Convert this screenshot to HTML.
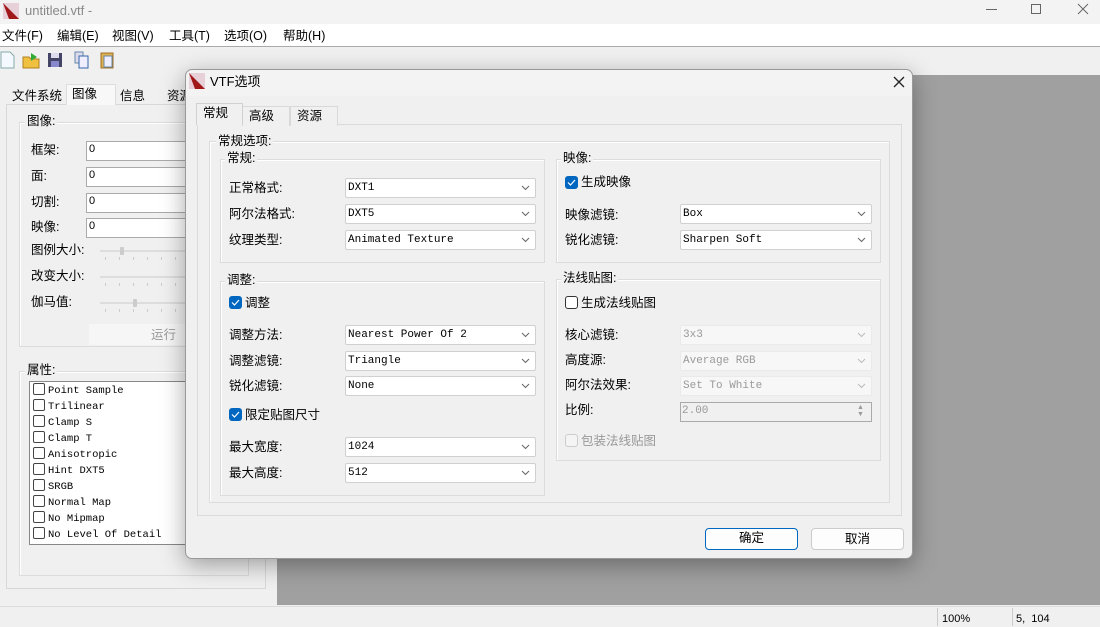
<!DOCTYPE html>
<html><head><meta charset="utf-8"><style>
*{margin:0;padding:0;box-sizing:border-box}
body{width:1100px;height:626px;position:relative;overflow:hidden;background:#f0f0f0;font-family:"Liberation Sans","Noto Sans CJK SC",sans-serif;font-size:12px;color:#000}
.a{position:absolute}
.t{position:absolute;white-space:nowrap;font-size:12.5px;line-height:16px}
.g{position:absolute;border:1px solid #dcdcdc;box-shadow:inset 1px 1px 0 #fff}
.gl{position:absolute;background:#f0f0f0;padding:0 2px;font-size:12.5px;line-height:15px;white-space:nowrap}
.cb{position:absolute;height:20px;background:#fff;border:1px solid #d0d0d0;border-radius:2px;font-family:"Liberation Mono",monospace;font-size:11px;line-height:18px;padding-left:2px;white-space:nowrap}
.cb.d{background:#f7f7f7;color:#9a9a9a;border-color:#eaeaea}
.cb svg{position:absolute;right:5px;top:6px}
.chk{position:absolute;width:13px;height:13px;border-radius:3px;background:#0067c0}
.chk svg{position:absolute;left:2px;top:3px}
.un{position:absolute;width:13px;height:13px;border-radius:3px;border:1px solid #333;background:#fff}
.mono{font-family:"Liberation Mono",monospace;font-size:11px}
.tab{position:absolute;height:20px;border:1px solid #d9d9d9;border-bottom:none;background:#f0f0f0;font-size:12.5px;line-height:18px;padding-left:6px}
.pl span{display:inline-block;width:12px;height:12px;border:1px solid #444;border-radius:2px;vertical-align:-2px;margin-right:3px}
.th{position:absolute;width:4px;height:8px;background:#ccc;border-radius:1px}
.tk{position:absolute;height:3px;width:90px;background:repeating-linear-gradient(90deg,#ccc 0 1px,transparent 1px 14px)}
</style></head><body>
<div class="a" style="left:0;top:0;width:1100px;height:24px;background:#f3f3f3"></div>
<svg class="a" style="left:3px;top:3px" width="16" height="16"><rect width="16" height="16" fill="#e8d0d8"/><path d="M0 0L16 16H6Z" fill="#a01818"/></svg>
<div class="t" style="left:25px;top:3px;font-size:13px;color:#888">untitled.vtf -</div>
<div class="a" style="left:986px;top:9px;width:11px;height:1px;background:#666"></div>
<div class="a" style="left:1031px;top:4px;width:10px;height:10px;border:1px solid #666"></div>
<svg class="a" style="left:1077px;top:3px" width="12" height="12"><path d="M1 1L11 11M11 1L1 11" stroke="#666" stroke-width="1"/></svg>
<div class="a" style="left:0;top:24px;width:1100px;height:23px;background:#fff;border-bottom:1px solid #aaa"></div>
<div class="t" style="left:2px;top:28px">文件(F)</div>
<div class="t" style="left:57px;top:28px">编辑(E)</div>
<div class="t" style="left:112px;top:28px">视图(V)</div>
<div class="t" style="left:169px;top:28px">工具(T)</div>
<div class="t" style="left:224px;top:28px">选项(O)</div>
<div class="t" style="left:283px;top:28px">帮助(H)</div>
<svg class="a" style="left:0;top:51px" width="120" height="18">
<path d="M1 1h9l4 4v12H1z" fill="#f4f8ff" stroke="#8aa"/>
<path d="M23 6h6l2 2h8v9H23z" fill="#f0c040" stroke="#b08020"/><path d="M31 2l6 4-6 4z" fill="#3a3"/>
<rect x="48" y="2" width="14" height="14" fill="#446" /><rect x="51" y="2" width="8" height="5" fill="#dde"/><rect x="51" y="10" width="8" height="6" fill="#88c"/>
<rect x="75" y="1" width="8" height="11" fill="#dde" stroke="#68a"/><rect x="79" y="5" width="9" height="12" fill="#eef" stroke="#36a"/>
<rect x="101" y="2" width="12" height="15" fill="#e0b050" stroke="#a07020"/><rect x="104" y="5" width="8" height="11" fill="#eef" stroke="#68a"/>
</svg>
<div class="a" style="left:6px;top:104px;width:260px;height:485px;border:1px solid #d8d8d8"></div>
<div class="t" style="left:12px;top:88px">文件系统</div>
<div class="a" style="left:66px;top:84px;width:50px;height:21px;background:#f8f8f8;border:1px solid #ddd;border-bottom:none"></div>
<div class="t" style="left:72px;top:86px">图像</div>
<div class="t" style="left:120px;top:88px">信息</div>
<div class="t" style="left:167px;top:88px">资源</div>
<div class="g" style="left:19px;top:122px;width:230px;height:225px"></div>
<div class="gl" style="left:25px;top:114px">图像:</div>
<div class="t" style="left:31px;top:142px">框架:</div><div class="a" style="left:86px;top:141px;width:110px;height:20px;background:#fff;border:1px solid #aaa;font-size:11px;padding:1px 2px">0</div>
<div class="t" style="left:31px;top:168px">面:</div><div class="a" style="left:86px;top:167px;width:110px;height:20px;background:#fff;border:1px solid #aaa;font-size:11px;padding:1px 2px">0</div>
<div class="t" style="left:31px;top:194px">切割:</div><div class="a" style="left:86px;top:193px;width:110px;height:20px;background:#fff;border:1px solid #aaa;font-size:11px;padding:1px 2px">0</div>
<div class="t" style="left:31px;top:219px">映像:</div><div class="a" style="left:86px;top:218px;width:110px;height:20px;background:#fff;border:1px solid #aaa;font-size:11px;padding:1px 2px">0</div>
<div class="t" style="left:31px;top:242px">图例大小:</div>
<div class="t" style="left:31px;top:268px">改变大小:</div>
<div class="t" style="left:31px;top:294px">伽马值:</div>
<div class="a" style="left:100px;top:250px;width:90px;height:2px;background:#ddd"></div>
<div class="a" style="left:100px;top:276px;width:90px;height:2px;background:#ddd"></div>
<div class="a" style="left:100px;top:302px;width:90px;height:2px;background:#ddd"></div>
<div class="th" style="left:120px;top:247px"></div><div class="th" style="left:133px;top:299px"></div>
<div class="tk" style="left:105px;top:257px"></div><div class="tk" style="left:105px;top:283px"></div><div class="tk" style="left:105px;top:309px"></div>
<div class="a" style="left:89px;top:324px;width:100px;height:21px;background:#f6f6f6"></div>
<div class="t" style="left:151px;top:327px;color:#999">运行</div>
<div class="g" style="left:19px;top:371px;width:230px;height:205px"></div>
<div class="gl" style="left:25px;top:363px">属性:</div>
<div class="a" style="left:29px;top:381px;width:160px;height:164px;background:#fff;border:1px solid #888"></div>
<div class="a pl" style="left:33px;top:383px;font-family:'Liberation Mono',monospace;font-size:10.5px;line-height:16px">
<div><span></span>Point Sample</div><div><span></span>Trilinear</div><div><span></span>Clamp S</div><div><span></span>Clamp T</div><div><span></span>Anisotropic</div><div><span></span>Hint DXT5</div><div><span></span>SRGB</div><div><span></span>Normal Map</div><div><span></span>No Mipmap</div><div><span></span>No Level Of Detail</div>
</div>
<div class="a" style="left:277px;top:75px;width:823px;height:530px;background:#a0a0a0"></div>
<div class="a" style="left:0;top:606px;width:1100px;height:20px;background:#f0f0f0;border-top:1px solid #ddd"></div>
<div class="a" style="left:937px;top:608px;width:1px;height:18px;background:#ccc"></div>
<div class="a" style="left:1012px;top:608px;width:1px;height:18px;background:#ccc"></div>
<div class="t" style="left:942px;top:611px;font-size:11px">100%</div>
<div class="t" style="left:1016px;top:611px;font-size:11px">5,&nbsp; 104</div>
<div class="a" style="left:185px;top:69px;width:728px;height:490px;background:#f0f0f0;border:1px solid #999;border-radius:7px;box-shadow:0 6px 24px rgba(0,0,0,.35)"></div>
<div class="a" style="left:186px;top:70px;width:726px;height:26px;background:#f3f3f3;border-radius:7px 7px 0 0"></div>
<svg class="a" style="left:189px;top:73px" width="16" height="16"><rect width="16" height="16" fill="#e8d0d8"/><path d="M0 0L16 16H6Z" fill="#a01818"/></svg>
<div class="t" style="left:210px;top:74px;font-size:13px">VTF选项</div>
<svg class="a" style="left:893px;top:76px" width="12" height="12"><path d="M1 1L11 11M11 1L1 11" stroke="#222" stroke-width="1.3"/></svg>
<div class="a" style="left:197px;top:124px;width:705px;height:392px;border:1px solid #dadada;background:#f0f0f0"></div>
<div class="tab" style="left:242px;top:106px;width:48px">高级</div>
<div class="tab" style="left:290px;top:106px;width:48px">资源</div>
<div class="tab" style="left:196px;top:103px;width:47px;height:22px;background:#f0f0f0;border-color:#d0d0d0">常规</div>
<div class="g" style="left:209px;top:141px;width:681px;height:362px"></div>
<div class="gl" style="left:216px;top:134px">常规选项:</div>
<div class="g" style="left:220px;top:159px;width:325px;height:104px"></div>
<div class="gl" style="left:225px;top:151px">常规:</div>
<div class="t" style="left:229px;top:180px">正常格式:</div><div class="cb" style="left:345px;top:178px;width:191px">DXT1<svg width="9" height="6"><path d="M1 1l3.5 3.5L8 1" fill="none" stroke="#666"/></svg></div>
<div class="t" style="left:229px;top:206px">阿尔法格式:</div><div class="cb" style="left:345px;top:204px;width:191px">DXT5<svg width="9" height="6"><path d="M1 1l3.5 3.5L8 1" fill="none" stroke="#666"/></svg></div>
<div class="t" style="left:229px;top:232px">纹理类型:</div><div class="cb" style="left:345px;top:230px;width:191px">Animated Texture<svg width="9" height="6"><path d="M1 1l3.5 3.5L8 1" fill="none" stroke="#666"/></svg></div>
<div class="g" style="left:556px;top:159px;width:325px;height:104px"></div>
<div class="gl" style="left:561px;top:151px">映像:</div>
<div class="chk" style="left:565px;top:176px"><svg width="9" height="7"><path d="M1 3.5l2.5 2.5L8 1" fill="none" stroke="#fff" stroke-width="1.2"/></svg></div>
<div class="t" style="left:581px;top:174px">生成映像</div>
<div class="t" style="left:565px;top:207px">映像滤镜:</div><div class="cb" style="left:680px;top:204px;width:192px">Box<svg width="9" height="6"><path d="M1 1l3.5 3.5L8 1" fill="none" stroke="#666"/></svg></div>
<div class="t" style="left:565px;top:232px">锐化滤镜:</div><div class="cb" style="left:680px;top:230px;width:192px">Sharpen Soft<svg width="9" height="6"><path d="M1 1l3.5 3.5L8 1" fill="none" stroke="#666"/></svg></div>
<div class="g" style="left:220px;top:281px;width:325px;height:215px"></div>
<div class="gl" style="left:225px;top:273px">调整:</div>
<div class="chk" style="left:229px;top:296px"><svg width="9" height="7"><path d="M1 3.5l2.5 2.5L8 1" fill="none" stroke="#fff" stroke-width="1.2"/></svg></div>
<div class="t" style="left:245px;top:295px">调整</div>
<div class="t" style="left:229px;top:327px">调整方法:</div><div class="cb" style="left:345px;top:325px;width:191px">Nearest Power Of 2<svg width="9" height="6"><path d="M1 1l3.5 3.5L8 1" fill="none" stroke="#666"/></svg></div>
<div class="t" style="left:229px;top:353px">调整滤镜:</div><div class="cb" style="left:345px;top:351px;width:191px">Triangle<svg width="9" height="6"><path d="M1 1l3.5 3.5L8 1" fill="none" stroke="#666"/></svg></div>
<div class="t" style="left:229px;top:378px">锐化滤镜:</div><div class="cb" style="left:345px;top:376px;width:191px">None<svg width="9" height="6"><path d="M1 1l3.5 3.5L8 1" fill="none" stroke="#666"/></svg></div>
<div class="chk" style="left:229px;top:408px"><svg width="9" height="7"><path d="M1 3.5l2.5 2.5L8 1" fill="none" stroke="#fff" stroke-width="1.2"/></svg></div>
<div class="t" style="left:245px;top:407px">限定贴图尺寸</div>
<div class="t" style="left:229px;top:439px">最大宽度:</div><div class="cb" style="left:345px;top:437px;width:191px">1024<svg width="9" height="6"><path d="M1 1l3.5 3.5L8 1" fill="none" stroke="#666"/></svg></div>
<div class="t" style="left:229px;top:465px">最大高度:</div><div class="cb" style="left:345px;top:463px;width:191px">512<svg width="9" height="6"><path d="M1 1l3.5 3.5L8 1" fill="none" stroke="#666"/></svg></div>
<div class="g" style="left:556px;top:279px;width:325px;height:182px"></div>
<div class="gl" style="left:561px;top:271px">法线贴图:</div>
<div class="un" style="left:565px;top:296px"></div>
<div class="t" style="left:581px;top:295px">生成法线贴图</div>
<div class="t" style="left:565px;top:327px">核心滤镜:</div><div class="cb d" style="left:680px;top:325px;width:192px">3x3<svg width="9" height="6"><path d="M1 1l3.5 3.5L8 1" fill="none" stroke="#bbb"/></svg></div>
<div class="t" style="left:565px;top:352px">高度源:</div><div class="cb d" style="left:680px;top:351px;width:192px">Average RGB<svg width="9" height="6"><path d="M1 1l3.5 3.5L8 1" fill="none" stroke="#bbb"/></svg></div>
<div class="t" style="left:565px;top:377px">阿尔法效果:</div><div class="cb d" style="left:680px;top:376px;width:192px">Set To White<svg width="9" height="6"><path d="M1 1l3.5 3.5L8 1" fill="none" stroke="#bbb"/></svg></div>
<div class="t" style="left:565px;top:402px">比例:</div>
<div class="a mono" style="left:680px;top:402px;width:192px;height:20px;border:1px solid #aaa;background:#f0f0f0;color:#999;line-height:16px;padding-left:1px">2.00</div>
<div class="a" style="left:857px;top:404px;font-size:7px;color:#999;line-height:7px">▲<br>▼</div>
<div class="un" style="left:565px;top:434px;border-color:#ccc;background:#f4f4f4"></div>
<div class="t" style="left:581px;top:433px;color:#999">包装法线贴图</div>
<div class="a" style="left:705px;top:528px;width:93px;height:22px;background:#fdfdfd;border:1.5px solid #0067c0;border-radius:4px;text-align:center;line-height:19px;font-size:12.5px">确定</div>
<div class="a" style="left:811px;top:528px;width:93px;height:22px;background:#fdfdfd;border:1px solid #ccc;border-radius:4px;text-align:center;line-height:20px;font-size:12.5px">取消</div>
</body></html>
